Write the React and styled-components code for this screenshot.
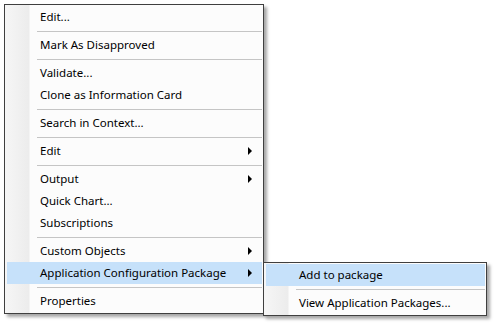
import React from "react";
import styled, { createGlobalStyle } from "styled-components";

const GlobalStyle = createGlobalStyle`
  html, body {
    margin: 0;
    padding: 0;
    background: #ffffff;
  }
  body {
    font-family: "Noto Sans", "Liberation Sans", sans-serif;
    font-size: 11.5px;
    color: #000;
  }
`;

const Page = styled.div`
  width: 494px;
  height: 323px;
  padding: 4px 0 0 4px;
  box-sizing: border-box;
  display: flex;
  align-items: flex-start;
`;

const Menu = styled.div`
  width: ${(p) => p.$width}px;
  box-sizing: border-box;
  border: 1px solid #3f3f3f;
  padding: 1px 0;
  background: linear-gradient(to right, #f6f6f6 0, #ececec 24px, #fcfcfc 25px, #fcfcfc 100%);
  box-shadow: 3px 3px 3px rgba(0, 0, 0, 0.35);
  display: flex;
  flex-direction: column;
`;

const Item = styled.div`
  position: relative;
  height: 22px;
  margin: 0 1px 0 2px;
  padding: 0 10px 0 33px;
  display: flex;
  align-items: center;
  justify-content: space-between;
  white-space: nowrap;
  background: ${(p) => (p.$active ? "#c6e1fa" : "transparent")};
`;

const Label = styled.span`
  line-height: 22px;
`;

const Arrow = styled.span`
  width: 0;
  height: 0;
  border-top: 4px solid transparent;
  border-bottom: 4px solid transparent;
  border-left: 4px solid #000;
`;

const Separator = styled.div`
  height: 6px;
  display: flex;
  align-items: center;
  padding: 0 1px 0 32px;
  &::after {
    content: "";
    flex: 1;
    height: 1px;
    background: #c5c5c5;
  }
`;

const SubMenuWrap = styled.div`
  position: absolute;
  left: 100%;
  top: 0;
  margin-left: 1px;
  z-index: 2;
`;

const mainItems = [
  { label: "Edit..." },
  "sep",
  { label: "Mark As Disapproved" },
  "sep",
  { label: "Validate..." },
  { label: "Clone as Information Card" },
  "sep",
  { label: "Search in Context..." },
  "sep",
  { label: "Edit", sub: true },
  "sep",
  { label: "Output", sub: true },
  { label: "Quick Chart..." },
  { label: "Subscriptions" },
  "sep",
  { label: "Custom Objects", sub: true },
  { label: "Application Configuration Package", sub: true, active: true, open: true },
  "sep",
  { label: "Properties" },
];

function SubMenu() {
  return (
    <Menu $width={224}>
      <Item $active>
        <Label>Add to package</Label>
      </Item>
      <Separator />
      <Item>
        <Label>View Application Packages...</Label>
      </Item>
    </Menu>
  );
}

export default function App() {
  return (
    <>
      <GlobalStyle />
      <Page>
        <Menu $width={260}>
          {mainItems.map((it, i) =>
            it === "sep" ? (
              <Separator key={i} />
            ) : (
              <Item key={i} $active={it.active}>
                <Label>{it.label}</Label>
                {it.sub && <Arrow />}
                {it.open && (
                  <SubMenuWrap>
                    <SubMenu />
                  </SubMenuWrap>
                )}
              </Item>
            )
          )}
        </Menu>
      </Page>
    </>
  );
}
